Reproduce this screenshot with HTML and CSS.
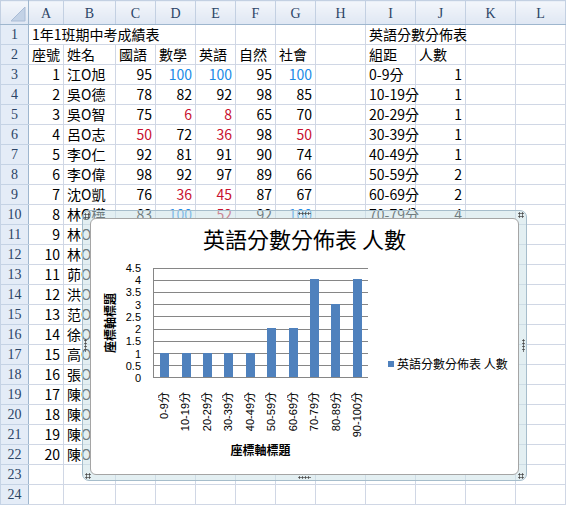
FILE: index.html
```html
<!DOCTYPE html>
<html lang="zh-Hant">
<head>
<meta charset="utf-8">
<title>1年1班期中考成績表</title>
<link rel="stylesheet" href="styles.css">
</head>
<body>
<div class="sheet">
<table class="grid">
<colgroup><col class="c-rh"><col class="c-a"><col class="c-b"><col class="c-n" span="5"><col class="c-w" span="5"></colgroup>
<thead>
<tr><th class="corner"><svg width="24" height="20" viewBox="0 0 24 20"><polygon points="22,4 22,18 8,18" fill="#c3d2e6" stroke="#a9bcd6" stroke-width="1"/></svg></th><th>A</th><th>B</th><th>C</th><th>D</th><th>E</th><th>F</th><th>G</th><th>H</th><th>I</th><th>J</th><th>K</th><th>L</th></tr>
</thead>
<tbody>
<tr><th>1</th><td colspan="4">1年1班期中考成績表</td><td></td><td></td><td></td><td></td><td colspan="2">英語分數分佈表</td><td></td><td></td></tr>
<tr><th>2</th><td>座號</td><td>姓名</td><td>國語</td><td>數學</td><td>英語</td><td>自然</td><td>社會</td><td></td><td>組距</td><td>人數</td><td></td><td></td></tr>
<tr><th>3</th><td class="n">1</td><td>江O旭</td><td class="n">95</td><td class="n hi">100</td><td class="n hi">100</td><td class="n">95</td><td class="n hi">100</td><td></td><td>0-9分</td><td class="n">1</td><td></td><td></td></tr>
<tr><th>4</th><td class="n">2</td><td>吳O德</td><td class="n">78</td><td class="n">82</td><td class="n">92</td><td class="n">98</td><td class="n">85</td><td></td><td>10-19分</td><td class="n">1</td><td></td><td></td></tr>
<tr><th>5</th><td class="n">3</td><td>吳O智</td><td class="n">75</td><td class="n lo">6</td><td class="n lo">8</td><td class="n">65</td><td class="n">70</td><td></td><td>20-29分</td><td class="n">1</td><td></td><td></td></tr>
<tr><th>6</th><td class="n">4</td><td>呂O志</td><td class="n lo">50</td><td class="n">72</td><td class="n lo">36</td><td class="n">98</td><td class="n lo">50</td><td></td><td>30-39分</td><td class="n">1</td><td></td><td></td></tr>
<tr><th>7</th><td class="n">5</td><td>李O仁</td><td class="n">92</td><td class="n">81</td><td class="n">91</td><td class="n">90</td><td class="n">74</td><td></td><td>40-49分</td><td class="n">1</td><td></td><td></td></tr>
<tr><th>8</th><td class="n">6</td><td>李O偉</td><td class="n">98</td><td class="n">92</td><td class="n">97</td><td class="n">89</td><td class="n">66</td><td></td><td>50-59分</td><td class="n">2</td><td></td><td></td></tr>
<tr><th>9</th><td class="n">7</td><td>沈O凱</td><td class="n">76</td><td class="n lo">36</td><td class="n lo">45</td><td class="n">87</td><td class="n">67</td><td></td><td>60-69分</td><td class="n">2</td><td></td><td></td></tr>
<tr><th>10</th><td class="n">8</td><td>林O樺</td><td class="n">83</td><td class="n hi">100</td><td class="n lo">52</td><td class="n">92</td><td class="n hi">100</td><td></td><td>70-79分</td><td class="n">4</td><td></td><td></td></tr>
<tr><th>11</th><td class="n">9</td><td>林O宏</td><td></td><td></td><td></td><td></td><td></td><td></td><td></td><td></td><td></td><td></td></tr>
<tr><th>12</th><td class="n">10</td><td>林O銘</td><td></td><td></td><td></td><td></td><td></td><td></td><td></td><td></td><td></td><td></td></tr>
<tr><th>13</th><td class="n">11</td><td>茆O軒</td><td></td><td></td><td></td><td></td><td></td><td></td><td></td><td></td><td></td><td></td></tr>
<tr><th>14</th><td class="n">12</td><td>洪O傑</td><td></td><td></td><td></td><td></td><td></td><td></td><td></td><td></td><td></td><td></td></tr>
<tr><th>15</th><td class="n">13</td><td>范O廷</td><td></td><td></td><td></td><td></td><td></td><td></td><td></td><td></td><td></td><td></td></tr>
<tr><th>16</th><td class="n">14</td><td>徐O翔</td><td></td><td></td><td></td><td></td><td></td><td></td><td></td><td></td><td></td><td></td></tr>
<tr><th>17</th><td class="n">15</td><td>高O豪</td><td></td><td></td><td></td><td></td><td></td><td></td><td></td><td></td><td></td><td></td></tr>
<tr><th>18</th><td class="n">16</td><td>張O瑋</td><td></td><td></td><td></td><td></td><td></td><td></td><td></td><td></td><td></td><td></td></tr>
<tr><th>19</th><td class="n">17</td><td>陳O安</td><td></td><td></td><td></td><td></td><td></td><td></td><td></td><td></td><td></td><td></td></tr>
<tr><th>20</th><td class="n">18</td><td>陳O宇</td><td></td><td></td><td></td><td></td><td></td><td></td><td></td><td></td><td></td><td></td></tr>
<tr><th>21</th><td class="n">19</td><td>陳O霖</td><td></td><td></td><td></td><td></td><td></td><td></td><td></td><td></td><td></td><td></td></tr>
<tr><th>22</th><td class="n">20</td><td>陳O瑜</td><td></td><td></td><td></td><td></td><td></td><td></td><td></td><td></td><td></td><td></td></tr>
<tr><th>23</th><td></td><td></td><td></td><td></td><td></td><td></td><td></td><td></td><td></td><td></td><td></td><td></td></tr>
<tr><th>24</th><td></td><td></td><td></td><td></td><td></td><td></td><td></td><td></td><td></td><td></td><td></td><td></td></tr>
</tbody>
</table>

<div class="chart-frame">
  <span class="hd hd-tl"></span><span class="hd hd-tr"></span><span class="hd hd-bl"></span><span class="hd hd-br"></span>
  <span class="hd hd-ml"></span><span class="hd hd-mr"></span><span class="hd hd-mt"></span><span class="hd hd-mb"></span>
  <div class="chart">
    <div class="chart-title">英語分數分佈表 人數</div>
    <div class="chart-body">
      <div class="ytitle">座標軸標題</div>
      <div class="ylabels">
        <span>0</span><span>0.5</span><span>1</span><span>1.5</span><span>2</span><span>2.5</span><span>3</span><span>3.5</span><span>4</span><span>4.5</span>
      </div>
      <div class="plot">
        <div class="gridlines"><i></i><i></i><i></i><i></i><i></i><i></i><i></i><i></i><i></i></div>
        <div class="bars">
          <div class="slot"><div class="bar" style="height:24.4px"></div></div>
          <div class="slot"><div class="bar" style="height:24.4px"></div></div>
          <div class="slot"><div class="bar" style="height:24.4px"></div></div>
          <div class="slot"><div class="bar" style="height:24.4px"></div></div>
          <div class="slot"><div class="bar" style="height:24.4px"></div></div>
          <div class="slot"><div class="bar" style="height:48.9px"></div></div>
          <div class="slot"><div class="bar" style="height:48.9px"></div></div>
          <div class="slot"><div class="bar" style="height:97.8px"></div></div>
          <div class="slot"><div class="bar" style="height:73.3px"></div></div>
          <div class="slot"><div class="bar" style="height:97.8px"></div></div>
        </div>
      </div>
      <div class="xlabels">
        <div class="xl"><span>0-9分</span></div>
        <div class="xl"><span>10-19分</span></div>
        <div class="xl"><span>20-29分</span></div>
        <div class="xl"><span>30-39分</span></div>
        <div class="xl"><span>40-49分</span></div>
        <div class="xl"><span>50-59分</span></div>
        <div class="xl"><span>60-69分</span></div>
        <div class="xl"><span>70-79分</span></div>
        <div class="xl"><span>80-89分</span></div>
        <div class="xl"><span>90-100分</span></div>
      </div>
      <div class="xtitle">座標軸標題</div>
      <div class="legend"><span class="swatch"></span><span>英語分數分佈表 人數</span></div>
    </div>
  </div>
</div>
</div>
</body>
</html>
```
FILE: styles.css
```css
* { box-sizing: border-box; }
html, body { margin: 0; padding: 0; background: #fff; }
body {
  width: 573px;
  height: 516px;
  overflow: hidden;
  font-family: "Noto Sans CJK TC", "Liberation Sans", sans-serif;
  color: #000;
}
.sheet { position: relative; width: 573px; height: 516px; }

.grid {
  border-collapse: collapse;
  table-layout: fixed;
  width: 565px;
}
.c-rh { width: 28px; }
.c-a { width: 35px; }
.c-b { width: 52px; }
.c-n { width: 40px; }
.c-w { width: 50px; }

.grid td {
  height: 20px;
  padding: 0 3px;
  border: 1px solid #d0d7e5;
  font-size: 14px;
  line-height: 19px;
  white-space: nowrap;
  overflow: visible;
  text-align: left;
}
.grid td.n { text-align: right; }
.grid td.hi { color: #1b8ae6; }
.grid td.lo { color: #c8102e; }

.grid thead th {
  height: 24px;
  padding: 2px 0 0;
  font-family: "Liberation Serif", serif;
  font-weight: normal;
  font-size: 14px;
  color: #2b4466;
  background: linear-gradient(#f3f6fb, #dfe7f3);
  border: 1px solid #c3d0e2;
  border-bottom: 1px solid #9eb6ce;
  text-align: center;
}
.grid thead th.corner {
  padding: 0;
  border-right: 1px solid #9eb6ce;
  line-height: 0;
}
.grid tbody th {
  padding: 0;
  font-family: "Liberation Serif", serif;
  font-weight: normal;
  font-size: 14px;
  line-height: 19px;
  color: #2b4466;
  background: #e4ecf7;
  border: 1px solid #c5d3e5;
  border-right: 1px solid #9eb6ce;
  text-align: center;
}

/* chart overlay */
.chart-frame {
  position: absolute;
  left: 82px;
  top: 210px;
  width: 445px;
  height: 271px;
  padding: 7px 7px 5px 7px;
  border: 1px solid #a6bdcb;
  border-radius: 7px;
  background: rgba(204, 226, 232, 0.55);
}
.hd {
  position: absolute;
  background-image: radial-gradient(circle, #505050 0.9px, transparent 1.3px);
  background-size: 3px 3px;
}
.hd-tl { left: 1px; top: 2px; width: 6px; height: 6px; }
.hd-tr { left: 435px; top: 1px; width: 6px; height: 6px; }
.hd-bl { left: 2px; top: 262px; width: 6px; height: 6px; }
.hd-br { left: 435px; top: 262px; width: 6px; height: 6px; }
.hd-ml { left: 1px; top: 128px; width: 3px; height: 13px; }
.hd-mr { left: 439px; top: 128px; width: 3px; height: 13px; }
.hd-mt { left: 215px; top: 1px; width: 13px; height: 3px; }
.hd-mb { left: 215px; top: 265px; width: 13px; height: 3px; }

.chart {
  width: 100%;
  height: 100%;
  background: #fff;
  border: 1px solid #a5a5a5;
  border-radius: 6px;
  font-family: "Liberation Sans", "Noto Sans CJK TC", sans-serif;
  color: #000;
}
.chart-title {
  padding-top: 9px;
  height: 33px;
  line-height: 20px;
  text-align: center;
  font-size: 22px;
  font-family: "Noto Sans CJK TC", sans-serif;
  white-space: nowrap;
}
.chart-body {
  display: grid;
  grid-template-columns: 37px 25px 215px 1fr;
  grid-template-rows: 16px 110px 59px 26px;
}
.ytitle {
  grid-column: 1;
  grid-row: 2;
  justify-self: center;
  align-self: center;
  writing-mode: vertical-rl;
  text-orientation: sideways;
  transform: rotate(180deg);
  font-family: "Noto Sans CJK TC", sans-serif;
  font-weight: bold;
  font-size: 12px;
  line-height: 12px;
  white-space: nowrap;
}
.ylabels {
  grid-column: 2;
  grid-row: 2;
  align-self: start;
  height: 122px;
  margin-top: -6px;
  padding-right: 12px;
  display: flex;
  flex-direction: column-reverse;
  justify-content: space-between;
  align-items: flex-end;
  font-size: 11px;
  line-height: 12px;
}
.plot {
  grid-column: 3;
  grid-row: 2;
  display: grid;
  border-left: 1px solid #868686;
}
.gridlines, .bars { grid-area: 1 / 1; }
.gridlines {
  display: flex;
  flex-direction: column;
  border-bottom: 1px solid #868686;
}
.gridlines i { flex: 1; border-top: 1px solid #868686; }
.bars {
  display: flex;
  align-items: flex-end;
  padding-bottom: 1px;
}
.slot {
  flex: 1;
  display: flex;
  justify-content: center;
  align-items: flex-end;
}
.bar { width: 9px; background: #4f81bd; }

.xlabels {
  grid-column: 3;
  grid-row: 3;
  display: flex;
  padding-top: 14px;
}
.xl {
  flex: 1;
  display: flex;
  justify-content: center;
  align-items: flex-start;
}
.xl span {
  writing-mode: vertical-rl;
  text-orientation: sideways;
  transform: rotate(180deg);
  font-size: 11px;
  line-height: 12px;
  white-space: nowrap;
}
.xtitle {
  grid-column: 3;
  grid-row: 4;
  text-align: center;
  font-family: "Noto Sans CJK TC", sans-serif;
  font-weight: bold;
  font-size: 12px;
  line-height: 26px;
  white-space: nowrap;
}
.legend {
  grid-column: 4;
  grid-row: 1 / span 4;
  align-self: start;
  margin-top: 105px;
  padding-left: 20px;
  display: flex;
  align-items: center;
  gap: 3px;
  font-family: "Noto Sans CJK TC", sans-serif;
  font-size: 12px;
  line-height: 14px;
  white-space: nowrap;
}
.swatch { width: 6px; height: 6px; background: #4f81bd; flex: none; }
```
